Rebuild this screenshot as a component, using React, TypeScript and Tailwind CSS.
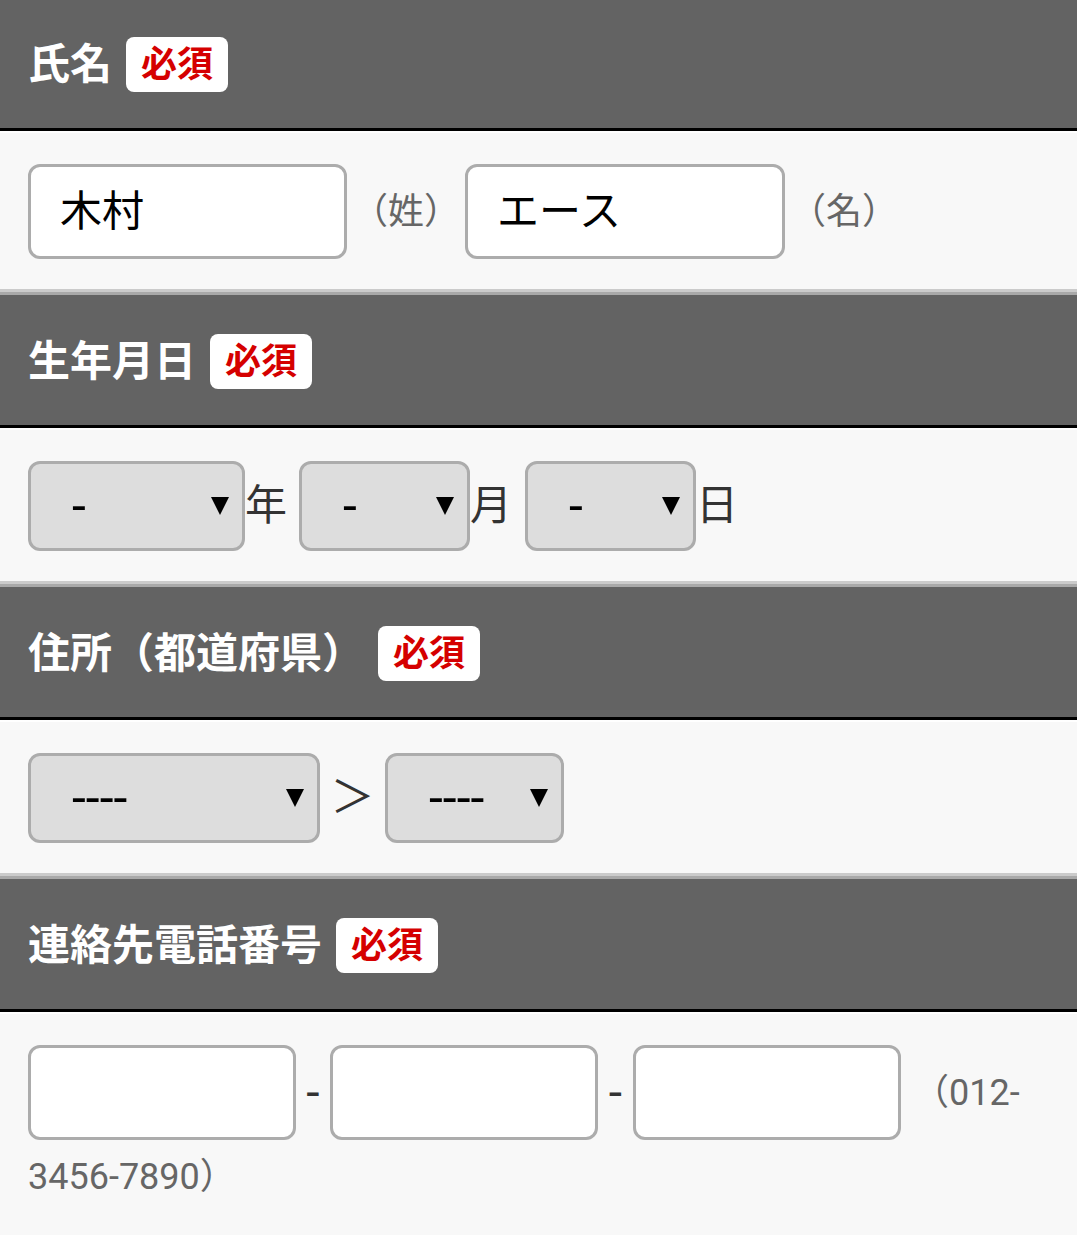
const FONT = "font-['Roboto','Noto_Sans_CJK_JP',sans-serif]";

function Badge() {
  return (
    <span className="ml-[14px] flex h-[55px] items-center rounded-[8px] bg-white px-[15px] text-[36px] font-bold leading-none text-[#d50000]">
      必須
    </span>
  );
}

function Header({ label, first }: { label: string; first?: boolean }) {
  const cls = first
    ? "h-[131px] pt-[1px]"
    : "h-[136px] border-t-[3px] border-t-[#a9a9a9] pt-[3px]";
  return (
    <div className={`flex items-center border-b-[3px] border-b-black bg-[#636363] pl-[28px] ${cls}`}>
      <span className="text-[42px] font-bold leading-none text-white">{label}</span>
      <Badge />
    </div>
  );
}

function Body({ children, last }: { children: React.ReactNode; last?: boolean }) {
  const cls = last ? "min-h-[224px]" : "border-b-[3px] border-b-[#cbcbcb] pb-[30px]";
  return (
    <div className={`border-t-2 border-t-white bg-[#f8f8f8] px-[28px] pt-[31px] ${cls}`}>{children}</div>
  );
}

function TextBox({ value, w }: { value?: string; w: string }) {
  return (
    <div
      className={`flex h-[95px] shrink-0 items-center rounded-[12px] border-[3px] border-[#acacac] bg-white pl-[29px] text-[42px] leading-none text-black ${w}`}
    >
      {value}
    </div>
  );
}

function Arrow() {
  return (
    <svg width="18" height="18" viewBox="0 0 18 18">
      <path d="M0 0H18L9 18Z" fill="#000" />
    </svg>
  );
}

function Select({ label, w }: { label: string; w: string }) {
  return (
    <div
      className={`flex h-[90px] shrink-0 items-center justify-between rounded-[12px] border-[3px] border-[#acacac] bg-[#dddddd] pl-[41px] pr-[13px] ${w}`}
    >
      <span className="text-[50px] leading-none text-black">{label}</span>
      <Arrow />
    </div>
  );
}

export default function App() {
  return (
    <div className={`w-[1077px] min-h-[1235px] bg-[#f8f8f8] ${FONT}`}>
      <Header label="氏名" first />
      <Body>
        <div className="flex items-center">
          <TextBox value="木村" w="w-[319px]" />
          <span className="mx-[5px] text-[36px] leading-none text-[#666]">（姓）</span>
          <TextBox value="エース" w="w-[320px]" />
          <span className="ml-[5px] text-[36px] leading-none text-[#666]">（名）</span>
        </div>
      </Body>

      <Header label="生年月日" />
      <Body>
        <div className="flex items-center text-[42px] leading-none text-[#333]">
          <Select label="-" w="w-[217px]" />
          <span className="mr-[12px]">年</span>
          <Select label="-" w="w-[171px]" />
          <span className="mr-[13px]">月</span>
          <Select label="-" w="w-[171px]" />
          <span>日</span>
        </div>
      </Body>

      <Header label="住所（都道府県）" />
      <Body>
        <div className="flex items-center">
          <Select label="----" w="w-[292px]" />
          <span className="w-[65px] text-center text-[44px] leading-none text-[#333]">＞</span>
          <Select label="----" w="w-[179px]" />
        </div>
      </Body>

      <Header label="連絡先電話番号" />
      <Body last>
        <div className="flex items-center">
          <TextBox w="w-[268px]" />
          <span className="w-[34px] text-center text-[48px] leading-none text-[#333]">-</span>
          <TextBox w="w-[268px]" />
          <span className="w-[35px] text-center text-[48px] leading-none text-[#333]">-</span>
          <TextBox w="w-[268px]" />
          <span className="ml-[12px] text-[36px] leading-none text-[#666]">（012-</span>
        </div>
        <div className="mt-[17px] text-[36px] leading-[40px] text-[#666]">3456-7890）</div>
      </Body>
    </div>
  );
}
